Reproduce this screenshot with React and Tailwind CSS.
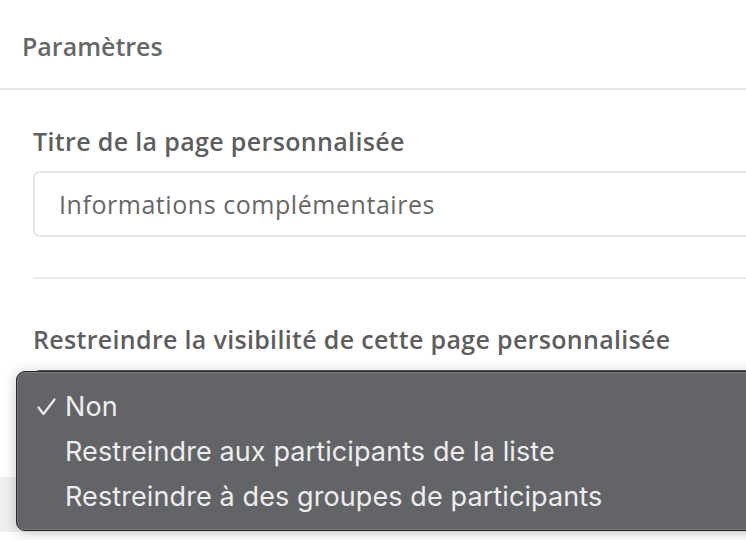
const options = [
  { label: "Non", checked: true },
  { label: "Restreindre aux participants de la liste", checked: false },
  { label: "Restreindre à des groupes de participants", checked: false },
];

function Check() {
  return (
    <svg width="19" height="18" viewBox="0 0 19 18" fill="none" className="shrink-0">
      <path d="M1.5 9.5 L6.5 16 L17.5 1.5" stroke="#ececec" strokeWidth="2.2" strokeLinecap="round" strokeLinejoin="round" />
    </svg>
  );
}

export default function App() {
  return (
    <div className="relative h-[540px] w-[746px] overflow-hidden bg-white font-['Open_Sans',sans-serif]">
      <div className="h-[90px] border-b-2 border-[#e8e8e8] pl-[22px] pt-[29px] text-[25px] font-semibold leading-[34px] text-[#676767]">
        Paramètres
      </div>

      <div className="w-[800px] pl-[33px]">
        <div className="mt-[35px] text-[25px] font-semibold leading-[32px] tracking-[0.35px] text-[#5e5e5e]">
          Titre de la page personnalisée
        </div>
        <div className="mt-[14px] flex h-[66px] items-center rounded-[7px] border-2 border-[#e6e6e6] px-[24px] text-[25px] leading-[34px] tracking-[0.55px] text-[#676767]">
          Informations complémentaires
        </div>
        <div className="mt-[40px] h-[2px] bg-[#ececec]" />
        <div className="mt-[44px] text-[25px] font-semibold leading-[32px] tracking-[0.32px] text-[#5e5e5e]">
          Restreindre la visibilité de cette page personnalisée
        </div>
        <div className="mt-[15px] h-[66px] rounded-[7px] border-2 border-[#555]" />
      </div>

      <div className="mt-[41px] h-[55px] bg-[#efefef]" />

      <div className="absolute left-[16px] top-[371px] h-[160px] w-[760px] rounded-[9px] border border-[#262626] bg-[#636468] pt-[12px] shadow-[inset_0_0_0_1px_rgba(255,255,255,0.14),0_2px_14px_rgba(0,0,0,0.22)] font-['Inter',sans-serif]">
        {options.map((o) => (
          <div key={o.label} className="flex h-[45px] items-center text-[27px] leading-[45px] tracking-[0.1px] text-[#ededed]">
            <div className="flex w-[48px] justify-start pl-[20px]">{o.checked ? <Check /> : null}</div>
            <span>{o.label}</span>
          </div>
        ))}
      </div>
    </div>
  );
}
